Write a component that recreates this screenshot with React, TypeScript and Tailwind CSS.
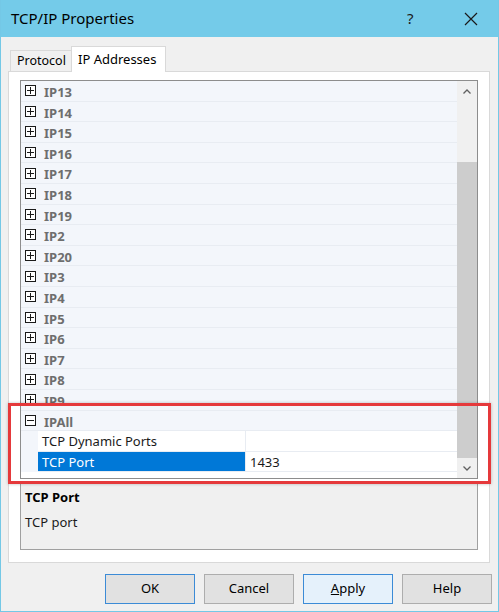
import { FC } from 'react';

const font = { fontFamily: '"Noto Sans", "Open Sans", sans-serif' };

const categories = [
  'IP13', 'IP14', 'IP15', 'IP16', 'IP17', 'IP18', 'IP19', 'IP2',
  'IP20', 'IP3', 'IP4', 'IP5', 'IP6', 'IP7', 'IP8', 'IP9',
];

const ToggleBox: FC<{ open?: boolean }> = ({ open }) => (
  <svg width="11" height="11" viewBox="0 0 11 11" className="block">
    <rect x="0.5" y="0.5" width="10" height="10" fill="white" stroke="#1a1a1a" />
    <line x1="2" y1="5.5" x2="9" y2="5.5" stroke="#1a1a1a" />
    {!open && <line x1="5.5" y1="2" x2="5.5" y2="9" stroke="#1a1a1a" />}
  </svg>
);

const CategoryRow: FC<{ label: string; open?: boolean }> = ({ label, open }) => (
  <div className="flex h-[20.6px] shrink-0 items-center border-b border-[#e8ecf2] bg-[#f3f6fb]">
    <div className="flex w-[17px] justify-center pl-[2px]">
      <ToggleBox open={open} />
    </div>
    <span className="pl-[6px] pt-[4px] text-[13px] font-bold text-[#6e6e6e]">{label}</span>
  </div>
);

const PropRow: FC<{ name: string; value?: string; selected?: boolean }> = ({ name, value, selected }) => (
  <div className="flex h-[20.6px] shrink-0 bg-[#f3f6fb]">
    <div className="w-[17px]" />
    <div
      className={`flex w-[208px] items-center border-b border-r border-[#e8ecf2] pl-[4px] pt-[2px] text-[13px] ${
        selected ? 'bg-[#0078d7] text-white' : 'bg-white text-[#1a1a1a]'
      }`}
    >
      {name}
    </div>
    <div className="flex flex-1 items-center border-b border-[#e8ecf2] bg-white pl-[4px] pt-[2px] text-[13px] text-[#1a1a1a]">
      {value}
    </div>
  </div>
);

const Button: FC<{ label: React.ReactNode; variant?: 'default' | 'hover' }> = ({ label, variant }) => (
  <div
    className={`flex h-[30px] w-[90px] items-center justify-center border text-[13px] text-black ${
      variant === 'default'
        ? 'border-[#3c8bd6] bg-[#e1e1e1]'
        : variant === 'hover'
          ? 'border-[#3c8bd6] bg-[#e5f1fb]'
          : 'border-[#adadad] bg-[#e1e1e1]'
    }`}
  >
    {label}
  </div>
);

const App: FC = () => {
  return (
    <div className="relative flex h-[612px] w-[499px] flex-col border-x border-b border-[#74c8e6] bg-[#f0f0f0]" style={font}>
      <div className="flex h-[37px] shrink-0 items-center bg-[#74cbe9] pl-[10px]">
        <span className="flex-1 text-[15px] text-black">TCP/IP Properties</span>
        <span className="w-[20px] text-[15px] text-[#1a1a1a]">?</span>
        <svg width="14" height="14" viewBox="0 0 14 14" className="ml-[37px] mr-[20px]">
          <path d="M1 1 L13 13 M13 1 L1 13" stroke="#1a1a1a" strokeWidth="1.2" />
        </svg>
      </div>

      <div className="flex flex-col pl-[7px] pr-[8px] pt-[9px]">
        <div className="flex items-end">
          <div className="ml-[2px] flex h-[21px] w-[61px] items-center border-l border-t border-[#d9d9d9] bg-[#f0f0f0] pl-[6px] text-[12.5px] text-black">
            Protocol
          </div>
          <div className="relative z-10 -mb-px flex h-[26px] w-[95px] items-center border-x border-t border-[#d9d9d9] bg-white pl-[6px] text-[13px] text-black">
            IP Addresses
          </div>
        </div>

        <div className="flex h-[492px] flex-col border border-[#d9d9d9] bg-white px-[11px] pt-[8px]">
          <div className="flex h-[399px] border border-[#8d8d8d] bg-white">
            <div className="flex flex-1 flex-col overflow-hidden">
              {categories.map((c) => (
                <CategoryRow key={c} label={c} />
              ))}
              <CategoryRow label="IPAll" open />
              <PropRow name="TCP Dynamic Ports" />
              <PropRow name="TCP Port" value="1433" selected />
            </div>
            <div className="flex w-[20px] flex-col bg-[#f0f0f0]">
              <div className="flex h-[20px] items-center justify-center">
                <svg width="8" height="5" viewBox="0 0 8 5">
                  <path d="M0.5 4.5 L4 1 L7.5 4.5" fill="none" stroke="#606060" strokeWidth="1.3" />
                </svg>
              </div>
              <div className="h-[61px]" />
              <div className="flex-1 bg-[#cdcdcd]" />
              <div className="flex h-[20px] items-center justify-center">
                <svg width="8" height="5" viewBox="0 0 8 5">
                  <path d="M0.5 0.5 L4 4 L7.5 0.5" fill="none" stroke="#606060" strokeWidth="1.3" />
                </svg>
              </div>
            </div>
          </div>

          <div className="mt-[4px] flex h-[67px] flex-col border border-[#a0a0a0] bg-[#f0f0f0] pl-[4px] pt-[4px]">
            <span className="text-[13px] font-bold text-black">TCP Port</span>
            <span className="mt-[5px] text-[13px] text-[#1a1a1a]">TCP port</span>
          </div>
        </div>

        <div className="-mr-[2px] mt-[11px] flex justify-end gap-[9px]">
          <Button label="OK" variant="default" />
          <Button label="Cancel" />
          <Button label={<><span className="underline">A</span>pply</>} variant="hover" />
          <Button label="Help" />
        </div>
      </div>

      <div className="pointer-events-none absolute left-[7px] top-[403px] h-[81px] w-[483px] border-[3px] border-[#e5393b] shadow-[0_0_3px_rgba(0,0,0,0.25)]" />
    </div>
  );
};

export default App;
